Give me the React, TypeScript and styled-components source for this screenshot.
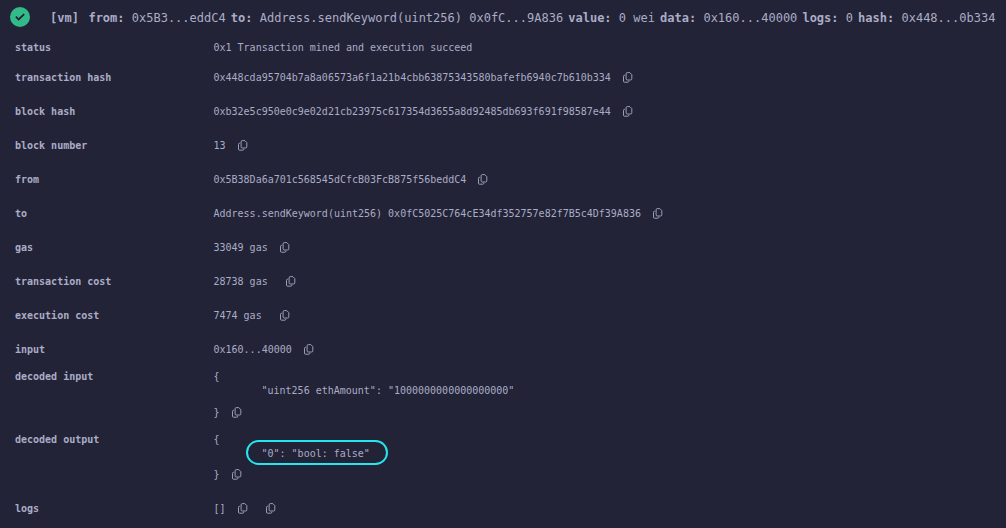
import styled, { createGlobalStyle } from "styled-components"

interface LogRow {
  label: string;
  value: string;
  gap?: number;
  height?: number;
  copies?: number;
}

const GlobalStyle = createGlobalStyle`
  body {
    margin: 0;
    background-color: #222336;
  }
`

const Terminal = styled.main`
  box-sizing: border-box;
  width: 1006px;
  height: 528px;
  overflow: hidden;
  background-color: #222336;
  color: #abacc6;
  font-family: "DejaVu Sans Mono", "Liberation Mono", monospace;
  font-size: 10px;
  line-height: 14px;
`

const Header = styled.header`
  display: flex;
  align-items: center;
  height: 34px;
  padding-left: 10px;
  font-size: 12px;
  white-space: pre;
`

const StatusIcon = styled.svg`
  width: 20px;
  height: 20px;
  flex: none;
  margin-right: 20px;
`

const Origin = styled.span`
  margin-right: 9.5px;
  padding-top: 2px;
  font-weight: bold;
`

const Summary = styled.div`
  display: flex;
  gap: 5.1px;
  padding-top: 2px;
`

const Row = styled.div<{ $height: number }>`
  display: grid;
  grid-template-columns: 198.5px 1fr;
  align-items: center;
  height: ${({ $height }) => $height}px;
  padding-left: 15px;
`

const BlockRow = styled(Row)`
  align-items: start;
`

const Label = styled.div`
  padding-top: 2px;
  font-weight: bold;
`

const Value = styled.div<{ $gap?: number }>`
  display: flex;
  align-items: center;
  gap: ${({ $gap }) => $gap ?? 12}px;
  white-space: pre;
`

const Text = styled.span`
  padding-top: 2px;
`

const BlockLabel = styled(Label)`
  padding-top: 4px;
`

const Block = styled.div`
  padding-top: 4px;
`

const Entry = styled.div`
  position: relative;
  width: max-content;
  margin-left: 48px;
`

const Closing = styled(Value)<{ $offset: number }>`
  margin-top: ${({ $offset }) => $offset}px;
`

const Highlight = styled.span`
  position: absolute;
  inset: -7px -18px -4px -16px;
  border: 2px solid #25e6ee;
  border-radius: 13px;
`

const CopySvg = styled.svg`
  width: 10px;
  height: 11px;
  flex: none;
`

const LogCopies = styled.span`
  display: flex;
  gap: 18.5px;
`

const rows: LogRow[] = [
  { label: "status", value: "0x1 Transaction mined and execution succeed", height: 26, copies: 0 },
  { label: "transaction hash", value: "0x448cda95704b7a8a06573a6f1a21b4cbb63875343580bafefb6940c7b610b334" },
  { label: "block hash", value: "0xb32e5c950e0c9e02d21cb23975c617354d3655a8d92485db693f691f98587e44" },
  { label: "block number", value: "13" },
  { label: "from", value: "0x5B38Da6a701c568545dCfcB03FcB875f56beddC4" },
  { label: "to", value: "Address.sendKeyword(uint256) 0x0fC5025C764cE34df352757e82f7B5c4Df39A836" },
  { label: "gas", value: "33049 gas" },
  { label: "transaction cost", value: "28738 gas", gap: 18 },
  { label: "execution cost", value: "7474 gas", gap: 18 },
  { label: "input", value: "0x160...40000" },
]

const summary = [
  ["from:", "0x5B3...eddC4"],
  ["to:", "Address.sendKeyword(uint256) 0x0fC...9A836"],
  ["value:", "0 wei"],
  ["data:", "0x160...40000"],
  ["logs:", "0"],
  ["hash:", "0x448...0b334"],
]

function CopyIcon() {
  return (
    <CopySvg viewBox="0 0 10 11" fill="none" stroke="currentColor" strokeWidth="0.9" strokeLinejoin="round">
      <path d="M4.3 .6h2.5L8.8 2.6v4.2a1.2 1.2 0 0 1-1.2 1.2H4.3a1.2 1.2 0 0 1-1.2-1.2v-5A1.2 1.2 0 0 1 4.3 .6Z" />
      <path d="M2.1 3.3H1.5a1 1 0 0 0-1 1v4.9a1 1 0 0 0 1 1h3.3a1 1 0 0 0 1-1v-.4" />
    </CopySvg>
  )
}

export default function App() {
  return (
    <Terminal>
      <GlobalStyle />
      <Header>
        <StatusIcon viewBox="0 0 20 20">
          <circle cx="10" cy="10" r="10" fill="#32ba89" />
          <path d="m5.9 9.7 2.7 2.8 5.6-5.3" fill="none" stroke="#222336" strokeWidth="1.8" />
        </StatusIcon>
        <Origin>[vm]</Origin>
        <Summary>
          {summary.map(([name, value]) => (
            <span key={name}><b>{name}</b> {value}</span>
          ))}
        </Summary>
      </Header>

      {rows.map((row) => (
        <Row key={row.label} $height={row.height ?? 34}>
          <Label>{row.label}</Label>
          <Value $gap={row.gap}>
            <Text>{row.value}</Text>
            {row.copies !== 0 && <CopyIcon />}
          </Value>
        </Row>
      ))}

      <BlockRow $height={63}>
        <BlockLabel>decoded input</BlockLabel>
        <Block>
          <div>{"{"}</div>
          <Entry>"uint256 ethAmount": "1000000000000000000"</Entry>
          <Closing $offset={6}><Text>{"}"}</Text><CopyIcon /></Closing>
        </Block>
      </BlockRow>
      <BlockRow $height={62}>
        <BlockLabel>decoded output</BlockLabel>
        <Block>
          <div>{"{"}</div>
          <Entry>
            "0": "bool: false"
            <Highlight />
          </Entry>
          <Closing $offset={5}><Text>{"}"}</Text><CopyIcon /></Closing>
        </Block>
      </BlockRow>

      <Row $height={34}>
        <Label>logs</Label>
        <Value>
          <Text>[]</Text>
          <LogCopies>
            <CopyIcon />
            <CopyIcon />
          </LogCopies>
        </Value>
      </Row>
    </Terminal>
  )
}
